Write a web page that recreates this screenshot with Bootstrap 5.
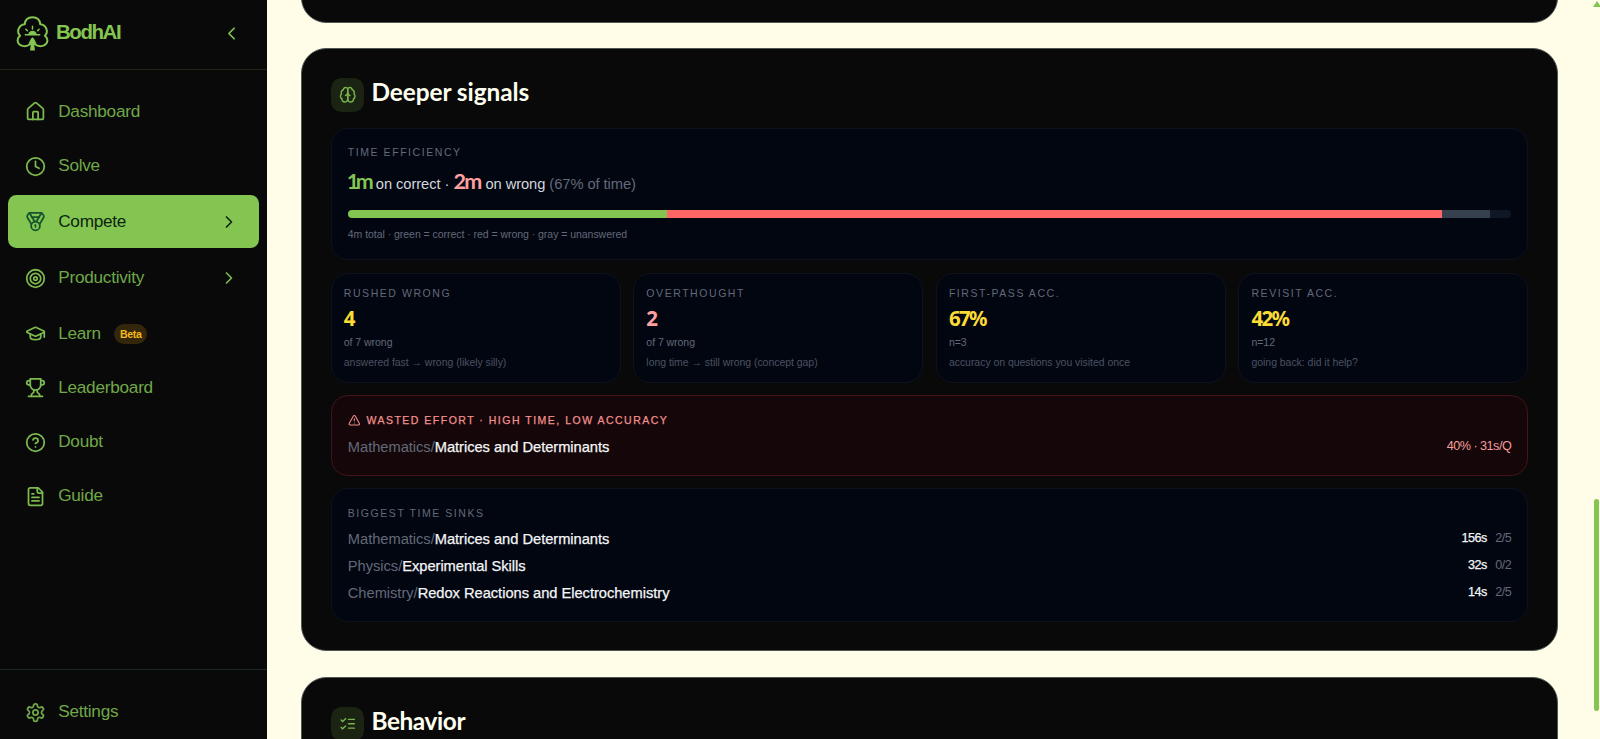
<!DOCTYPE html>
<html lang="en">
<head>
<meta charset="utf-8">
<title>BodhAI</title>
<link href="https://cdn.jsdelivr.net/npm/bootstrap@5.3.0/dist/css/bootstrap.min.css" rel="stylesheet">
<style>
:root{--leaf:#84c552}
html{font-size:16.8px}
body{background:#fffde8;font-family:"Liberation Sans",Arial,sans-serif;font-size:16.8px;line-height:1.5}
.app{height:739px}
.side{width:267px;background:#090909;color:#70a848}
.side-head{height:69.6px;padding:0 25px 2px 16px;border-bottom:1px solid #1c2715;color:var(--leaf)}
.brand-name{font-weight:700;font-size:20.5px;letter-spacing:-1.45px;line-height:1;margin:-3px 0 0 7px}
.side-menu{padding:17.3px 8.4px;gap:4.2px}
.side-item{height:50px;padding:0 20px 0 16.8px;border-radius:8.4px;color:inherit;text-decoration:none}
.side-item.expand{height:52.5px}
.side-item .lbl{margin-left:12px;font-size:17.2px;letter-spacing:-.25px}
.side-item.on{background:var(--leaf);color:#0c2410}
.side-item.on .ic{color:#14532d}
.side-foot{height:70px;padding:17px 8.4px 0;border-top:1px solid #1c2922}
svg{fill:none;stroke:currentColor;stroke-width:2;stroke-linecap:round;stroke-linejoin:round;flex:none}
.side .ic{width:21px;height:21px;color:#7dbb4f}
.side .chev{width:20px;height:20px;color:#7dbb4f}
.side .on .chev{color:#0c2410}
.tag{font-size:10.6px;font-weight:700;color:#f5b71c;background:#33260b;border-radius:20px;padding:0 6px;height:20px;line-height:20px;margin-left:13px;letter-spacing:-.35px}
.content-col{padding:0 42px 0 34px;gap:25.2px;height:739px}
.panel{background:#090909;border:1px solid #4e5755;border-radius:25.2px;padding:29.4px 28.8px;flex:none}
.panel-first{height:61px;margin-top:-38.5px}
.panel-main{height:603.8px}
.tile{width:33.6px;height:33.6px;border-radius:10.5px;background:#1b2413;color:#78b34c}
.tile svg{width:17.5px;height:17.5px}
.title{font-family:Lato,"Open Sans",sans-serif;font-weight:700;font-size:24.4px;line-height:28px;letter-spacing:-.05px;color:#fffff0;margin:-5px 0 0 7px}
.title.short{letter-spacing:-.4px}
.box{background:#020611;border:1px solid #0c131e;border-radius:16.8px;padding:16.4px 16px}
.cap{font-size:10.5px;letter-spacing:1.56px;line-height:15.75px;color:#626978;text-transform:uppercase}
.dimmer{color:#4a5261}
.muted{color:#626978}
.tiny{font-size:10.5px;line-height:15.75px;letter-spacing:-.04px}
.big{font-family:Lato,sans-serif;font-weight:700;font-size:21.5px;letter-spacing:-1.5px;margin-right:.5px}
.big.one{letter-spacing:-3.5px;margin-left:-1px;margin-right:1.500px}
.effort{font-size:14.7px;line-height:29.4px;color:#d3d7dd;letter-spacing:-.06px}
.meter{height:8.4px;background:#0f1626;border-radius:9px;overflow:hidden}
.g{background:var(--leaf)}.r{background:#ff6666}.s{background:#364150}
.stats{gap:12.8px}
.stat{padding:12.6px 12px;height:110px;flex:1}
.num{font-family:"Noto Sans","Open Sans",sans-serif;font-weight:700;font-size:20.5px;line-height:33px;letter-spacing:-1.7px}
.yel{color:#fbdb34}.pink{color:#ffa0a0}
.warnbox{background:#150709;border-color:#43141a}
.line{font-size:14.7px;line-height:22px;letter-spacing:-.035px}
.strong{color:#f4f5f6;-webkit-text-stroke:.25px #f4f5f6}
.side-num{font-size:12.6px;letter-spacing:-.5px;line-height:20px}
.rail{right:1px;top:0;width:5px;height:739px}
.thumb{background:var(--leaf);border-radius:3px;height:212px;top:499px;width:5px}
.uparrow{left:-1px;top:1px;width:8px;height:6px;background:var(--leaf);clip-path:polygon(50% 0,100% 100%,0 100%)}
</style>
</head>
<body class="overflow-hidden">
<div class="app d-flex">
<aside class="side d-flex flex-column flex-shrink-0">
  <div class="side-head d-flex align-items-center">
    <svg style="width:33px;height:35px" viewBox="0 0 33 35" stroke-width="2.4"><path d="M14 28.300C10 31.500 2 30.500 1.600 24.500C1.500 22.500 2.500 20.800 4 19.800C0 15.500 3 8.800 8.700 8.300C9.200 3 13 1.300 16.500 1.300S23.800 3 24.300 8.300C30 8.800 33 15.500 29 19.800C30.500 20.800 31.500 22.500 31.400 24.500C31 30.500 23 31.500 19 28.300"/><path d="M9.300 18.700H23.700M16.500 13V10.300M11.300 14.600L9.900 13.200M21.700 14.600L23.100 13.200" stroke-width="1.500"/><path d="M12.300 18.500C12.500 13.500 20.500 13.500 20.700 18.500Z" fill="currentColor" stroke="none"/><path d="M16.500 21.300C14.300 22.800 14 25 12.500 27.500L14.800 28.500L14 34.500H19L18.200 28.500L20.500 27.500C19 25 18.700 22.800 16.500 21.300Z" fill="currentColor" stroke="none"/></svg>
    <span class="brand-name">BodhAI</span>
    <svg class="ms-auto" style="width:21px;height:21px" viewBox="0 0 24 24"><path d="m15 18-6-6 6-6"/></svg>
  </div>
  <nav class="side-menu d-flex flex-column flex-grow-1">
    <a class="side-item d-flex align-items-center"><svg class="ic" viewBox="0 0 24 24"><path d="M15 21v-8a1 1 0 0 0-1-1h-4a1 1 0 0 0-1 1v8"/><path d="M3 10a2 2 0 0 1 .709-1.528l7-5.999a2 2 0 0 1 2.582 0l7 5.999A2 2 0 0 1 21 10v9a2 2 0 0 1-2 2H5a2 2 0 0 1-2-2z"/></svg><span class="lbl">Dashboard</span></a>
    <a class="side-item d-flex align-items-center"><svg class="ic" viewBox="0 0 24 24"><circle cx="12" cy="12" r="10"/><path d="M12 6v6l4 2"/></svg><span class="lbl">Solve</span></a>
    <a class="side-item expand on d-flex align-items-center"><svg class="ic" viewBox="0 0 24 24"><path d="M7.210 15 2.660 7.140a2 2 0 0 1 .130-2.200L4.400 2.800A2 2 0 0 1 6 2h12a2 2 0 0 1 1.600.8l1.600 2.140a2 2 0 0 1 .140 2.200L16.790 15"/><path d="M11 12 5.120 2.200"/><path d="m13 12 5.880-9.800"/><path d="M8 7h8"/><circle cx="12" cy="17" r="5"/><path d="M12 18v-2h-.5"/></svg><span class="lbl">Compete</span><svg class="chev ms-auto" viewBox="0 0 24 24"><path d="m9 18 6-6-6-6"/></svg></a>
    <a class="side-item expand d-flex align-items-center"><svg class="ic" viewBox="0 0 24 24"><circle cx="12" cy="12" r="10"/><circle cx="12" cy="12" r="6"/><circle cx="12" cy="12" r="2"/></svg><span class="lbl">Productivity</span><svg class="chev ms-auto" viewBox="0 0 24 24"><path d="m9 18 6-6-6-6"/></svg></a>
    <a class="side-item d-flex align-items-center"><svg class="ic" viewBox="0 0 24 24"><path d="M21.420 10.922a1 1 0 0 0-.019-1.838L12.830 5.180a2 2 0 0 0-1.660 0L2.600 9.080a1 1 0 0 0 0 1.832l8.570 3.908a2 2 0 0 0 1.660 0z"/><path d="M22 10v6"/><path d="M6 12.500V16a6 3 0 0 0 12 0v-3.500"/></svg><span class="lbl">Learn</span><span class="tag">Beta</span></a>
    <a class="side-item d-flex align-items-center"><svg class="ic" viewBox="0 0 24 24"><path d="M6 9H4.500a2.500 2.500 0 0 1 0-5H6"/><path d="M18 9h1.500a2.500 2.500 0 0 0 0-5H18"/><path d="M4 22h16"/><path d="M10 14.660V17c0 .55-.47.98-.97 1.210C7.850 18.750 7 20.240 7 22"/><path d="M14 14.660V17c0 .55.47.98.97 1.210C16.150 18.750 17 20.240 17 22"/><path d="M18 2H6v7a6 6 0 0 0 12 0V2Z"/></svg><span class="lbl">Leaderboard</span></a>
    <a class="side-item d-flex align-items-center"><svg class="ic" viewBox="0 0 24 24"><circle cx="12" cy="12" r="10"/><path d="M9.090 9a3 3 0 0 1 5.830 1c0 2-3 3-3 3"/><path d="M12 17h.01"/></svg><span class="lbl">Doubt</span></a>
    <a class="side-item d-flex align-items-center"><svg class="ic" viewBox="0 0 24 24"><path d="M15 2H6a2 2 0 0 0-2 2v16a2 2 0 0 0 2 2h12a2 2 0 0 0 2-2V7Z"/><path d="M14 2v4a2 2 0 0 0 2 2h4M10 9H8M16 13H8M16 17H8"/></svg><span class="lbl">Guide</span></a>
  </nav>
  <div class="side-foot">
    <a class="side-item d-flex align-items-center"><svg class="ic" viewBox="0 0 24 24" style="color:#70a848"><path d="M12.220 2h-.44a2 2 0 0 0-2 2v.18a2 2 0 0 1-1 1.730l-.43.25a2 2 0 0 1-2 0l-.15-.08a2 2 0 0 0-2.730.73l-.22.38a2 2 0 0 0 .73 2.730l.15.1a2 2 0 0 1 1 1.720v.51a2 2 0 0 1-1 1.740l-.15.09a2 2 0 0 0-.73 2.730l.22.38a2 2 0 0 0 2.730.73l.15-.08a2 2 0 0 1 2 0l.43.25a2 2 0 0 1 1 1.730V20a2 2 0 0 0 2 2h.44a2 2 0 0 0 2-2v-.18a2 2 0 0 1 1-1.730l.43-.25a2 2 0 0 1 2 0l.15.08a2 2 0 0 0 2.730-.73l.22-.39a2 2 0 0 0-.73-2.730l-.15-.08a2 2 0 0 1-1-1.740v-.5a2 2 0 0 1 1-1.740l.15-.09a2 2 0 0 0 .73-2.730l-.22-.38a2 2 0 0 0-2.730-.73l-.15.08a2 2 0 0 1-2 0l-.43-.25a2 2 0 0 1-1-1.730V4a2 2 0 0 0-2-2z"/><circle cx="12" cy="12" r="3"/></svg><span class="lbl">Settings</span></a>
  </div>
</aside>
<main class="content-col d-flex flex-column flex-grow-1 overflow-hidden">
  <section class="panel panel-first"></section>
  <section class="panel panel-main">
    <div class="d-flex align-items-center" style="margin-bottom:16.3px">
      <span class="tile d-flex align-items-center justify-content-center"><svg viewBox="0 0 24 24"><path d="M12 5a3 3 0 1 0-5.997.125 4 4 0 0 0-2.526 5.770 4 4 0 0 0 .556 6.588A4 4 0 1 0 12 18Z"/><path d="M12 5a3 3 0 1 1 5.997.125 4 4 0 0 1 2.526 5.770 4 4 0 0 1-.556 6.588A4 4 0 1 1 12 18Z"/><path d="M9 13a4.500 4.500 0 0 0 3-4 4.500 4.500 0 0 0 3 4"/></svg></span>
      <h2 class="title">Deeper signals</h2>
    </div>
    <div class="box" style="height:132px">
      <div class="cap">Time efficiency</div>
      <div class="effort" style="margin-top:6px"><span class="big one" style="color:#84c552">1m</span> on correct · <span class="big pink">2m</span> on wrong <span class="muted">(67% of time)</span></div>
      <div class="meter d-flex" style="margin-top:10.4px"><i class="g" style="width:27.4%"></i><i class="r" style="width:66.63%"></i><i class="s" style="width:4.17%"></i></div>
      <div class="tiny muted" style="margin-top:8.6px">4m total · green = correct · red = wrong · gray = unanswered</div>
    </div>
    <div class="stats d-flex" style="margin:12.8px 0 12.4px">
      <div class="box stat"><div class="cap">Rushed wrong</div><div class="num yel">4</div><div class="tiny muted">of 7 wrong</div><div class="tiny dimmer mt-1">answered fast → wrong (likely silly)</div></div>
      <div class="box stat"><div class="cap">Overthought</div><div class="num pink">2</div><div class="tiny muted">of 7 wrong</div><div class="tiny dimmer mt-1">long time → still wrong (concept gap)</div></div>
      <div class="box stat"><div class="cap">First-pass acc.</div><div class="num yel">67%</div><div class="tiny muted">n=3</div><div class="tiny dimmer mt-1">accuracy on questions you visited once</div></div>
      <div class="box stat"><div class="cap">Revisit acc.</div><div class="num yel">42%</div><div class="tiny muted">n=12</div><div class="tiny dimmer mt-1">going back: did it help?</div></div>
    </div>
    <div class="box warnbox" style="height:80.6px">
      <div class="cap d-flex align-items-center" style="color:#f28f8f;letter-spacing:1.5px;-webkit-text-stroke:.25px #f28f8f"><svg style="width:12.6px;height:12.6px;margin-right:6px" viewBox="0 0 24 24"><path d="m21.730 18-8-14a2 2 0 0 0-3.480 0l-8 14A2 2 0 0 0 4 21h16a2 2 0 0 0 1.730-3M12 9v4M12 17h.01"/></svg>Wasted effort · high time, low accuracy</div>
      <div class="line d-flex justify-content-between" style="margin-top:8px"><span><span class="muted">Mathematics/</span><span class="strong">Matrices and Determinants</span></span><span class="side-num" style="color:#f79c9c">40% · 31s/Q</span></div>
    </div>
    <div class="box" style="height:133.500px;margin-top:12.6px">
      <div class="cap" style="margin-bottom:7px">Biggest time sinks</div>
      <div class="d-flex flex-column" style="gap:5px">
      <div class="line d-flex justify-content-between"><span><span class="muted">Mathematics/</span><span class="strong">Matrices and Determinants</span></span><span class="side-num"><span class="strong">156s</span><span class="muted ms-2">2/5</span></span></div>
      <div class="line d-flex justify-content-between"><span><span class="muted">Physics/</span><span class="strong">Experimental Skills</span></span><span class="side-num"><span class="strong">32s</span><span class="muted ms-2">0/2</span></span></div>
      <div class="line d-flex justify-content-between"><span><span class="muted">Chemistry/</span><span class="strong">Redox Reactions and Electrochemistry</span></span><span class="side-num"><span class="strong">14s</span><span class="muted ms-2">2/5</span></span></div>
      </div>
    </div>
  </section>
  <section class="panel" style="height:160px">
    <div class="d-flex align-items-center">
      <span class="tile d-flex align-items-center justify-content-center"><svg viewBox="0 0 24 24"><path d="m3 17 2 2 4-4M3 7l2 2 4-4M13 6h8M13 12h8M13 18h8"/></svg></span>
      <h2 class="title short">Behavior</h2>
    </div>
  </section>
</main>
</div>
<div class="rail position-fixed"><div class="uparrow position-absolute"></div><div class="thumb position-absolute"></div></div>
<script src="https://cdn.jsdelivr.net/npm/bootstrap@5.3.0/dist/js/bootstrap.bundle.min.js"></script>
</body>
</html>
